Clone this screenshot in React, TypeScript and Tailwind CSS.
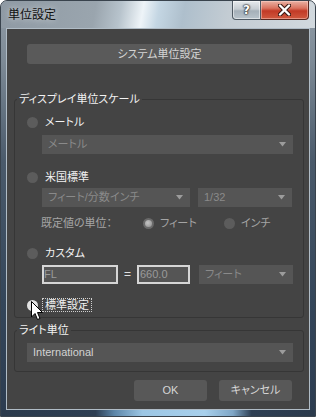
import React from "react";

const FONT =
  "font-['Liberation_Sans','Noto_Sans_CJK_JP',sans-serif] [font-feature-settings:'palt']";

function Radio({ state }: { state: "off" | "on" | "hot" }) {
  if (state === "on") {
    return (
      <span className="flex h-[11px] w-[11px] shrink-0 items-center justify-center rounded-full bg-[#6a6a6a]">
        <span className="h-[7px] w-[7px] rounded-full bg-[radial-gradient(circle_at_40%_40%,#c4c4c4,#8c8c8c)]" />
      </span>
    );
  }
  if (state === "hot") {
    return <span className="block h-[11px] w-[11px] shrink-0 rounded-full bg-[#e2e2e2]" />;
  }
  return <span className="block h-[11px] w-[11px] shrink-0 rounded-full bg-[#5c5c5c]" />;
}

function Arrow() {
  return (
    <svg width="7" height="5" viewBox="0 0 7 5" className="shrink-0">
      <polygon points="0,0 7,0 3.5,4.5" fill="#9c9c9c" />
    </svg>
  );
}

function Select({
  text,
  className,
  textClass,
}: {
  text: string;
  className: string;
  textClass: string;
}) {
  return (
    <div
      className={`flex h-[19px] items-center justify-between bg-[#555555] pl-[6px] pr-[7px] ${className}`}
    >
      <span className={`text-[11px] leading-[19px] ${textClass}`}>{text}</span>
      <Arrow />
    </div>
  );
}

function RadioRow({ label, state }: { label: string; state: "off" | "on" | "hot" }) {
  return (
    <div className="flex h-[14px] items-center gap-[7px]">
      <Radio state={state} />
      <span className="text-[11px] leading-[14px] text-[#f2f2f2]">{label}</span>
    </div>
  );
}

function Cursor() {
  return (
    <svg
      width="13"
      height="20"
      viewBox="0 0 13 20"
      className="pointer-events-none absolute left-[31px] top-[301px]"
    >
      <path
        d="M0.5 0.5 L0.5 16 L4 12.5 L6.5 18.5 L9 17.5 L6.5 11.5 L11.5 11.5 Z"
        fill="#ffffff"
        stroke="#000000"
        strokeWidth="1"
        strokeLinejoin="miter"
      />
    </svg>
  );
}

export default function App() {
  return (
    <div className={`relative h-[417px] w-[316px] overflow-hidden ${FONT}`}>
      <div className="flex h-[417px] w-[316px] flex-col rounded-t-[7px] border border-[#39434d] bg-[linear-gradient(180deg,#929da7_0px,#7d8a96_60px,#4a5a6b_160px,#34465a_300px,#2c3c50_100%)]">
        {/* Title bar */}
        <div className="flex h-[27px] shrink-0 items-start justify-between rounded-t-[6px] bg-[linear-gradient(100deg,#8f9aa4_0%,#9aa5ae_30%,#b7c3cc_38%,#eef4f8_45%,#c4d6e3_50%,#aebfcc_58%,#c3ccd3_72%,#d2d9de_100%)]">
          <span className="pl-[7px] pt-[6px] text-[12px] leading-[16px] text-[#101010] [text-shadow:0_0_6px_rgba(255,255,255,0.7)]">
            単位設定
          </span>
          <div className="mr-[6px] flex">
            <div className="flex h-[19px] w-[29px] items-center justify-center rounded-bl-[4px] border border-t-0 border-[#4f5a64] bg-[linear-gradient(180deg,#e6eaed_0%,#c5ccd2_45%,#a5b0b9_55%,#b8c3cb_100%)] shadow-[inset_0_0_0_1px_rgba(255,255,255,0.5)]">
              <span className="font-['DejaVu_Sans',sans-serif] text-[12px] font-bold leading-[12px] text-white [text-shadow:0_0_1px_#222,0_0_2px_#222,0_0_2px_#222]">
                ?
              </span>
            </div>
            <div className="flex h-[19px] w-[48px] items-center justify-center rounded-br-[4px] border border-l-0 border-t-0 border-[#5a2820] bg-[linear-gradient(180deg,#eab2a4_0%,#d9735f_40%,#c23a26_55%,#d0593f_100%)] shadow-[inset_0_0_0_1px_rgba(255,220,210,0.45)]">
              <svg width="13" height="12" viewBox="0 0 13 12">
                <path d="M2 1.5 L11 10.5 M11 1.5 L2 10.5" stroke="#3a1a14" strokeWidth="4.4" strokeLinecap="round" />
                <path d="M2 1.5 L11 10.5 M11 1.5 L2 10.5" stroke="#ffffff" strokeWidth="2.4" strokeLinecap="round" />
              </svg>
            </div>
          </div>
        </div>

        {/* Content */}
        <div className="ml-[5px] flex w-[304px] flex-col border border-[#b0bcc6] bg-[#444444]">
          <button className="ml-[20px] mt-[15px] flex h-[20px] w-[265px] items-center justify-center rounded-[3px] bg-[#5a5a5a] text-[11px] leading-[20px] text-[#d4d4d4]">
            システム単位設定
          </button>

          <fieldset className="ml-[7px] mt-[28px] w-[290px] rounded-[3px] border border-[#363636]">
            <legend className="ml-[2px] px-[2px] text-[11px] leading-[14px] text-[#f2f2f2]">
              ディスプレイ単位スケール
            </legend>
            <div className="flex flex-col pb-[5px] pl-[12px] pr-[10px]">
              <div className="mt-[9px]">
                <RadioRow label="メートル" state="off" />
              </div>
              <Select text="メートル" className="ml-[15px] mt-[6px]" textClass="text-[#8a8a8a]" />

              <div className="mt-[16px]">
                <RadioRow label="米国標準" state="off" />
              </div>
              <div className="ml-[15px] mt-[4px] flex gap-[8px]">
                <Select text="フィート/分数インチ" className="w-[148px]" textClass="text-[#8a8a8a]" />
                <Select text="1/32" className="w-[94px]" textClass="text-[#8a8a8a]" />
              </div>

              <div className="mt-[9px] flex h-[14px] items-center">
                <span className="ml-[14px] w-[102px] text-[11px] leading-[14px] text-[#a4a4a4]">
                  既定値の単位：
                </span>
                <div className="flex w-[81px] items-center gap-[6px]">
                  <Radio state="on" />
                  <span className="text-[11px] leading-[14px] text-[#a4a4a4]">フィート</span>
                </div>
                <div className="flex items-center gap-[6px]">
                  <Radio state="off" />
                  <span className="text-[11px] leading-[14px] text-[#a4a4a4]">インチ</span>
                </div>
              </div>

              <div className="mt-[16px]">
                <RadioRow label="カスタム" state="off" />
              </div>
              <div className="ml-[15px] mt-[5px] flex h-[19px] items-center">
                <div className="flex h-[19px] w-[76px] items-center border-2 border-[#d6d6d6] bg-[#555555] text-[11px] text-[#9a9a9a]">
                  FL
                </div>
                <span className="w-[19px] text-center text-[12px] leading-[19px] text-[#e0e0e0]">=</span>
                <div className="flex h-[19px] w-[53px] items-center border-2 border-[#d6d6d6] bg-[#555555] pl-[1px] text-[11px] text-[#9a9a9a]">
                  660.0
                </div>
                <Select text="フィート" className="ml-[9px] w-[94px]" textClass="text-[#8a8a8a]" />
              </div>

              <div className="mt-[14px] flex h-[14px] items-center gap-[4px]">
                <Radio state="hot" />
                <span className="flex h-[14px] w-[50px] items-center border border-dotted border-[#d0d0d0] pl-[2px] text-[11px] leading-[12px] text-[#f2f2f2]">
                  標準設定
                </span>
              </div>
            </div>
          </fieldset>

          <fieldset className="ml-[7px] mt-[5px] w-[290px] rounded-[3px] border border-[#363636]">
            <legend className="ml-[2px] px-[2px] text-[11px] leading-[14px] text-[#f2f2f2]">
              ライト単位
            </legend>
            <div className="flex flex-col pb-[9px] pl-[12px] pr-[10px]">
              <Select text="International" className="mt-[6px]" textClass="text-[#d2d2d2]" />
            </div>
          </fieldset>

          <div className="mb-[8px] mt-[8px] flex justify-end gap-[12px] pr-[17px]">
            <button className="flex h-[21px] w-[73px] items-center justify-center rounded-[3px] bg-[#585858] text-[11px] text-[#d6d6d6]">
              OK
            </button>
            <button className="flex h-[21px] w-[73px] items-center justify-center rounded-[3px] bg-[#585858] text-[11px] text-[#d6d6d6]">
              キャンセル
            </button>
          </div>
        </div>

        {/* Bottom frame */}
        <div className="mx-[1px] mt-auto h-[6px] bg-[linear-gradient(90deg,#2b3a4c_0%,#2e3f53_30%,#5d86a8_36%,#9cc6e4_45%,#a8d0ec_65%,#7fa6c6_74%,#2e3f53_80%,#2b3a4c_100%)]" />
      </div>
      <Cursor />
    </div>
  );
}
